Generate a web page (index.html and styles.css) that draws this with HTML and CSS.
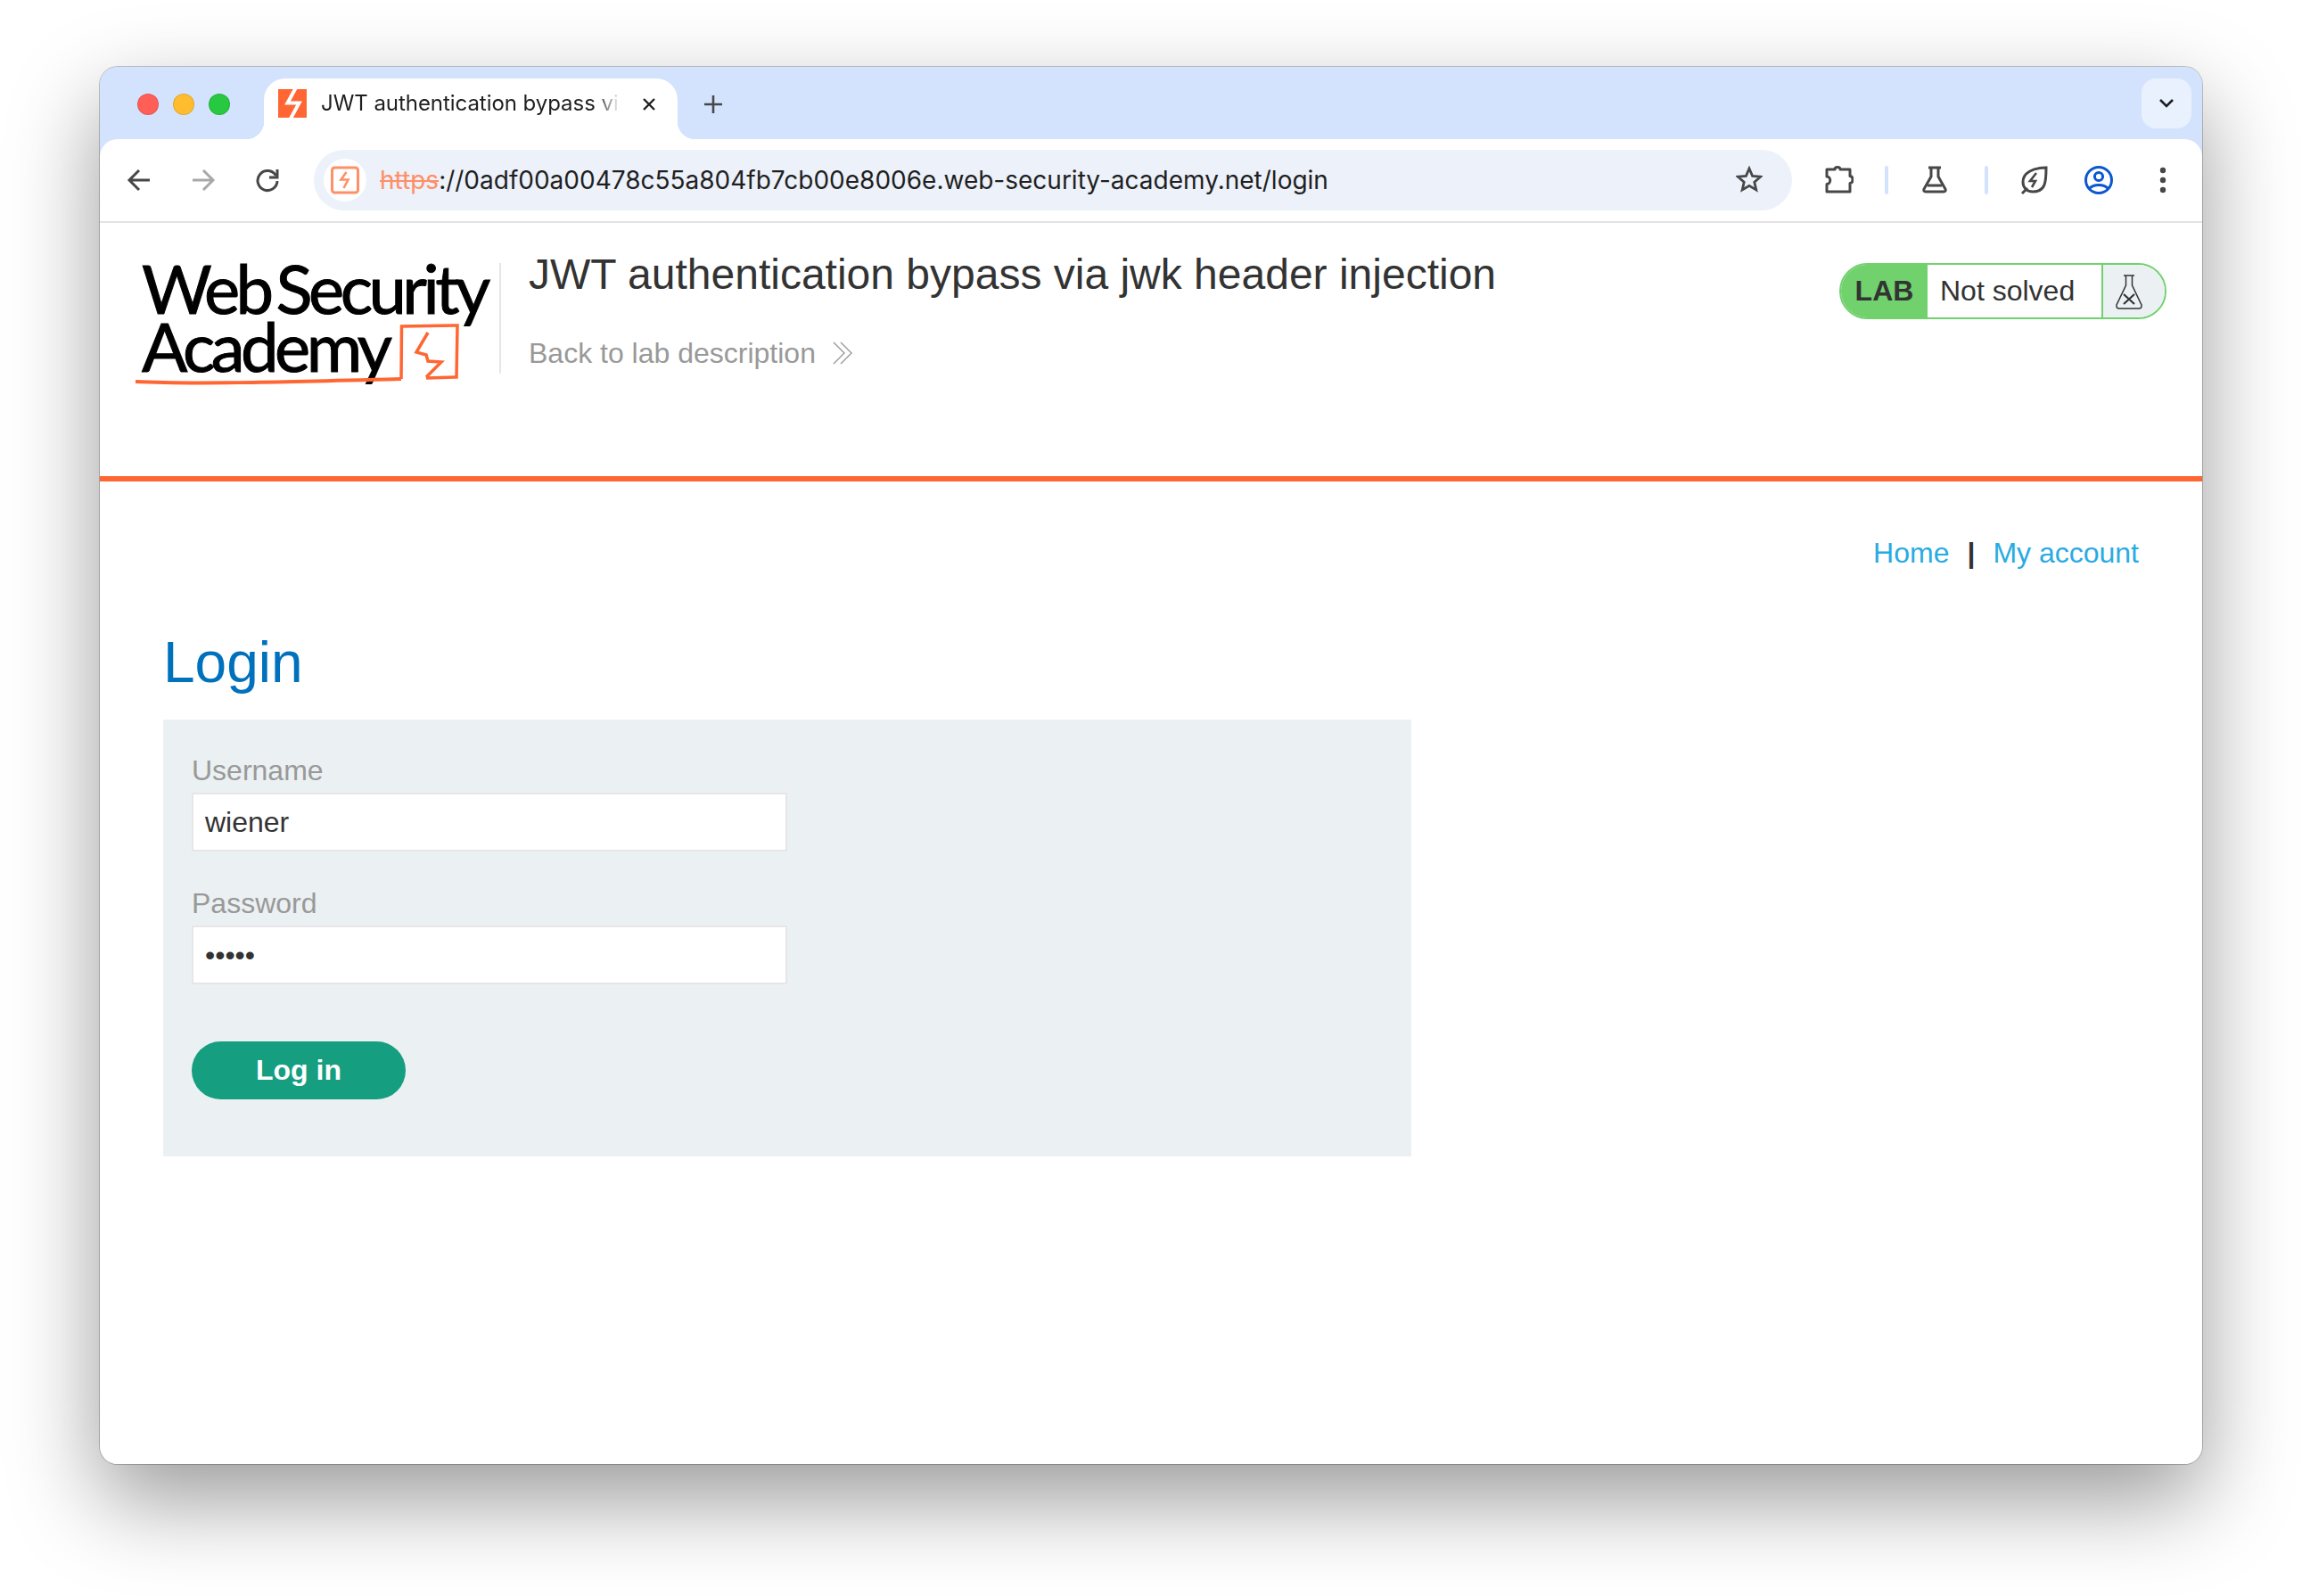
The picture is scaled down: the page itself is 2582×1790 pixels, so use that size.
FILE: index.html
```html
<!DOCTYPE html>
<html lang="en">
  <head>
    <meta charset="UTF-8" />
    <title>JWT authentication bypass via jwk header injection</title>
    <link rel="stylesheet" href="styles.css">
  </head>
  <body>
    <div class="window">
      <!-- Tab strip -->
      <div class="tabstrip">
        <div class="lights">
          <span class="light red"></span>
          <span class="light yellow"></span>
          <span class="light green"></span>
        </div>
        <div class="tab">
          <svg class="favicon" viewBox="0 0 32 32">
            <rect width="32" height="32" fill="#ff6633"/>
            <path d="M19.5 -1 L10.5 15.5 H23.5 L14 33" fill="none" stroke="#fff" stroke-width="4"/>
          </svg>
          <span class="tab-title">JWT authentication bypass via</span>
          <svg class="tab-close" viewBox="0 0 16 16"><path d="M2 2 L14 14 M14 2 L2 14" stroke="#1f1f1f" stroke-width="2.4" fill="none"/></svg>
        </div>
        <svg class="new-tab" viewBox="0 0 22 22"><path d="M11 1 V21 M1 11 H21" stroke="#474747" stroke-width="2.6" fill="none"/></svg>
        <div class="tab-search">
          <svg viewBox="0 0 18 12" width="18" height="12"><path d="M2 2 L9 9 L16 2" stroke="#1f1f1f" stroke-width="2.6" fill="none"/></svg>
        </div>
      </div>

      <!-- Toolbar -->
      <div class="toolbar">
        <div class="nav-icons">
          <svg class="icon" viewBox="0 0 28 28"><path d="M26 14 H4 M14 3 L3 14 L14 25" stroke="#474747" stroke-width="3" fill="none"/></svg>
          <svg class="icon" viewBox="0 0 28 28"><path d="M2 14 H24 M14 3 L25 14 L14 25" stroke="#a8a8a8" stroke-width="3" fill="none"/></svg>
          <svg class="icon" viewBox="0 0 28 28"><path d="M23.5 9 A11 11 0 1 0 25 15" stroke="#474747" stroke-width="3" fill="none"/><path d="M25 2 V11 H16" stroke="#474747" stroke-width="3" fill="none"/></svg>
        </div>
        <div class="omnibox">
          <div class="site-chip">
            <svg viewBox="0 0 32 32" width="32" height="32">
              <rect x="1.5" y="2" width="29" height="28" rx="3" fill="none" stroke="#ff8f66" stroke-width="3"/>
              <path d="M17.5 7 L11.5 15.5 H19.5 L14.5 25" fill="none" stroke="#ff8f66" stroke-width="2.6"/>
            </svg>
          </div>
          <div class="url"><span class="scheme">https</span>://0adf00a00478c55a804fb7cb00e8006e.web-security-academy.net/login</div>
          <svg class="icon star" viewBox="0 0 30 30"><path d="M15 3 L18.6 11.4 L27.6 12.2 L20.8 18.2 L22.8 27 L15 22.4 L7.2 27 L9.2 18.2 L2.4 12.2 L11.4 11.4 Z" stroke="#474747" stroke-width="2.8" fill="none" stroke-linejoin="miter"/></svg>
        </div>
        <div class="tool-icons">
          <svg class="icon puzzle" viewBox="0 0 32 32"><path d="M2 5 H11 C11 1.5 17 1.5 17 5 H28 V12.5 C32 12.5 32 20.5 28 20.5 V30 H2 V21.5 C7 21.5 7 13 2 13 Z" stroke="#474747" stroke-width="3" fill="none" stroke-linejoin="round"/></svg>
          <span class="divider"></span>
          <svg class="icon flask" viewBox="0 0 30 32"><path d="M8 2 H22 M11 2 V12 L3 26 Q2 29 5 29 H25 Q28 29 27 26 L19 12 V2" stroke="#474747" stroke-width="3" fill="none"/><path d="M7 22 H23" stroke="#474747" stroke-width="3"/></svg>
          <span class="divider"></span>
          <svg class="icon leaf" viewBox="0 0 32 34"><path d="M29 3 C29 20 28 30 14 30 C7 30 3 25 3 19 C3 9 14 3 29 3 Z M2 32 L8 26" stroke="#474747" stroke-width="3" fill="none"/><path d="M18 9 L11 18 H17 L13 25" stroke="#474747" stroke-width="2.6" fill="none"/></svg>
          <svg class="icon profile" viewBox="0 0 32 32"><circle cx="16" cy="16" r="14.5" stroke="#0b57d0" stroke-width="3" fill="none"/><circle cx="16" cy="12" r="4.6" stroke="#0b57d0" stroke-width="3" fill="none"/><path d="M5 26 C10 20 22 20 27 26" stroke="#0b57d0" stroke-width="3" fill="none"/></svg>
          <svg class="icon dots" viewBox="0 0 8 32"><circle cx="4" cy="5" r="3.2" fill="#474747"/><circle cx="4" cy="16" r="3.2" fill="#474747"/><circle cx="4" cy="27" r="3.2" fill="#474747"/></svg>
        </div>
      </div>

      <!-- Page -->
      <div class="page">
        <header class="lab-header">
          <div class="logo">
            <div class="logo-line">Web Security</div>
            <div class="logo-line">Academy</div>
            <svg class="logo-mark" viewBox="0 0 370 80">
              <path d="M0 73 C60 76 150 74 298 70" fill="none" stroke="#ff6633" stroke-width="4"/>
              <path d="M298 70 L298.5 11 L361 10 L360 68 L326 69" fill="none" stroke="#ff6633" stroke-width="3.5"/>
              <path d="M328 18 L315 40 L326 43 L328 50 L343 51 L326 68" fill="none" stroke="#ff6633" stroke-width="3.5"/>
            </svg>
          </div>
          <div class="lab-title">
            <h2>JWT authentication bypass via jwk header injection</h2>
            <a class="back-link" href="#">Back to lab description
              <svg viewBox="0 0 24 26" width="24" height="26"><path d="M2 1 L14 13 L2 25 M10 1 L22 13 L10 25" fill="none" stroke="#999" stroke-width="1.4"/></svg>
            </a>
          </div>
          <div class="lab-status">
            <span class="status-lab">LAB</span>
            <span class="status-text">Not solved</span>
            <span class="status-flask">
              <svg viewBox="0 0 32 40" width="32" height="40">
                <path d="M10 2 H22 M12.5 2 V13 L2 35 Q1.5 39 5 39 H27 Q30.5 39 30 35 L19.5 13 V2" fill="none" stroke="#333" stroke-width="1.5"/>
                <path d="M10 23 L22 34 M22 23 L10 34" stroke="#333" stroke-width="2.2" fill="none"/>
              </svg>
            </span>
          </div>
        </header>

        <main class="content">
          <nav class="top-links">
            <a href="#">Home</a>
            <span class="sep">|</span>
            <a href="#">My account</a>
          </nav>
          <h1>Login</h1>
          <form class="login-form" onsubmit="return false">
            <label for="username">Username</label>
            <input id="username" type="text" value="wiener" />
            <label for="password">Password</label>
            <input id="password" type="password" value="peter" />
            <button type="submit">Log in</button>
          </form>
        </main>
      </div>
    </div>
  </body>
</html>
```

FILE: styles.css
```css
* {
  box-sizing: border-box;
}

html,
body {
  height: 100%;
}

body {
  margin: 0;
  padding: 75px 112px 148px 112px;
  background-color: #fff;
  font-family: "Liberation Sans", Arial, sans-serif;
  overflow: hidden;
}

.window {
  height: 1567px;
  display: flex;
  flex-direction: column;
  background-color: #d3e3fd;
  border-radius: 20px;
  overflow: hidden;
  box-shadow: 0 0 0 1px rgba(0, 0, 0, 0.22), 0 40px 100px rgba(0, 0, 0, 0.4);
}

/* Tab strip */
.tabstrip {
  height: 81px;
  flex: none;
  display: flex;
  align-items: flex-start;
  padding-top: 13px;
  background-color: #d3e3fd;
}

.lights {
  display: flex;
  gap: 16px;
  margin: 17px 38px 0 42px;
}

.light {
  width: 24px;
  height: 24px;
  border-radius: 50%;
  border: 1px solid rgba(0, 0, 0, 0.1);
}

.red { background-color: #ff5f57; }
.yellow { background-color: #febc2e; }
.green { background-color: #28c840; }

.tab {
  position: relative;
  width: 464px;
  height: 68px;
  display: flex;
  align-items: flex-start;
  padding: 12px 0 0 16px;
  background-color: #fff;
  border-radius: 24px 24px 0 0;
}

/* the flared bottom corners of the tab */
.tab::before,
.tab::after {
  content: "";
  position: absolute;
  bottom: 0;
  width: 20px;
  height: 20px;
}

.tab::before {
  left: -20px;
  background: radial-gradient(circle at 0 0, #d3e3fd 20px, #fff 20.5px);
}

.tab::after {
  right: -20px;
  background: radial-gradient(circle at 100% 0, #d3e3fd 20px, #fff 20.5px);
}

.favicon {
  width: 32px;
  height: 32px;
  flex: none;
}

.tab-title {
  width: 346px;
  margin-left: 16px;
  white-space: nowrap;
  font-family: Inter, "Liberation Sans", sans-serif;
  font-size: 24px;
  letter-spacing: -0.05px;
  line-height: 32px;
  color: #1f1f1f;
  -webkit-mask-image: linear-gradient(to right, #000 89%, transparent 97%);
  mask-image: linear-gradient(to right, #000 89%, transparent 97%);
}

.tab-close {
  width: 16px;
  height: 16px;
  margin: 9px 0 0 14px;
  flex: none;
}

.new-tab {
  width: 22px;
  height: 22px;
  margin: 18px 0 0 29px;
  flex: none;
}

.tab-search {
  width: 56px;
  height: 56px;
  margin-left: auto;
  margin-right: 12px;
  display: flex;
  align-items: center;
  justify-content: center;
  border-radius: 16px;
  background-color: #e9f0fe;
}

/* Toolbar */
.toolbar {
  height: 94px;
  flex: none;
  display: flex;
  align-items: center;
  background-color: #fff;
  border-bottom: 2px solid #e3e3e3;
  border-radius: 20px 20px 0 0;
}

.icon {
  display: block;
  flex: none;
}

.nav-icons {
  width: 240px;
  display: flex;
  gap: 44px;
  padding-left: 30px;
}

.nav-icons .icon {
  width: 28px;
  height: 28px;
}

.omnibox {
  width: 1658px;
  height: 68px;
  display: flex;
  align-items: center;
  padding: 0 33px 0 11px;
  background-color: #ecf1fa;
  border-radius: 34px;
}

.site-chip {
  width: 48px;
  height: 48px;
  flex: none;
  display: flex;
  align-items: center;
  justify-content: center;
  background-color: #fff;
  border-radius: 50%;
}

.url {
  flex: 1;
  margin-left: 15px;
  font-family: Inter, "Liberation Sans", sans-serif;
  font-size: 28px;
  color: #1f1f1f;
  white-space: nowrap;
}

.scheme {
  color: #ff8f66;
  text-decoration: line-through;
}

.star {
  width: 30px;
  height: 30px;
  margin-top: -2px;
}

.tool-icons {
  flex: 1;
  display: flex;
  align-items: center;
  padding-left: 37px;
}

.puzzle { width: 32px; height: 32px; margin-top: -3px; }
.flask { width: 30px; height: 32px; margin: 0 41px 0 37px; }
.leaf { width: 32px; height: 34px; margin-left: 36px; }
.profile { width: 32px; height: 32px; margin-left: 40px; }
.dots { width: 8px; height: 32px; margin-left: 52px; }

.divider {
  width: 4px;
  height: 32px;
  border-radius: 2px;
  background-color: #d3e3fd;
}

.puzzle + .divider { margin-left: 35px; }

/* Page */
.page {
  flex: 1;
  background-color: #fff;
}

.lab-header {
  height: 290px;
  display: flex;
  align-items: flex-start;
  padding: 0 40px 0 40px;
  border-bottom: 6px solid #ff6633;
}

.logo {
  position: relative;
  width: 410px;
  height: 124px;
  margin-top: 45px;
  padding-left: 7px;
  border-right: 2px solid #e6e6e6;
  font-family: Lato, "Liberation Sans", sans-serif;
  font-size: 76px;
  font-weight: 400;
  letter-spacing: -4.5px;
  word-spacing: -8px;
  color: #000;
  line-height: 65px;
  -webkit-text-stroke: 1px #000;
}

.logo-line {
  white-space: nowrap;
}

.logo-line:first-child {
  margin-top: -5px;
}

/* underline and bracket drawn over the logo text */
.logo-mark {
  position: absolute;
  left: 0;
  top: 60px;
  width: 370px;
  height: 80px;
}

.lab-title {
  flex: 1;
  margin-left: 31px;
}

.lab-title h2 {
  margin: 30px 0 0;
  font-size: 48px;
  font-weight: 400;
  line-height: 56px;
  color: #333;
}

.back-link {
  display: flex;
  align-items: center;
  gap: 18px;
  margin-top: 40px;
  font-size: 32px;
  line-height: 40px;
  color: #999;
  text-decoration: none;
}

.lab-status {
  width: 367px;
  height: 63px;
  margin: 45px 0 0;
  display: flex;
  align-items: stretch;
  border: 2px solid #70d16d;
  border-radius: 32px;
  overflow: hidden;
  font-size: 32px;
  color: #333;
}

.status-lab {
  width: 97px;
  display: flex;
  align-items: center;
  justify-content: center;
  font-weight: 700;
  background-color: #70d16d;
}

.status-text {
  width: 197px;
  display: flex;
  align-items: center;
  padding-left: 14px;
  background-color: #fff;
  border-right: 2px solid #70d16d;
}

.status-flask {
  flex: 1;
  display: flex;
  align-items: center;
  padding-left: 13px;
  background-color: #ebf0f2;
}

.content {
  padding: 0 0 0 71px;
}

.top-links {
  display: flex;
  align-items: center;
  justify-content: flex-end;
  gap: 20px;
  margin: 60px 71px 0 0;
  font-size: 32px;
  line-height: 40px;
}

.top-links a {
  color: #29abe2;
  text-decoration: none;
}

.top-links .sep {
  color: #333;
  font-weight: 700;
}

.content h1 {
  margin: 63px 0 0;
  font-size: 64px;
  font-weight: 400;
  line-height: 80px;
  color: #0071bc;
}

.login-form {
  width: 1400px;
  height: 490px;
  margin-top: 24px;
  padding: 39px 32px 32px;
  background-color: #ebf0f2;
  display: flex;
  flex-direction: column;
  align-items: flex-start;
}

.login-form label {
  font-size: 32px;
  line-height: 36px;
  color: #999;
  margin-bottom: 7px;
}

.login-form input {
  width: 668px;
  height: 66px;
  margin-bottom: 40px;
  padding: 0 13px;
  border: 2px solid #e6e6e6;
  background-color: #fff;
  font-family: inherit;
  font-size: 32px;
  color: #333;
}

.login-form button {
  width: 240px;
  height: 65px;
  margin-top: 24px;
  border: 0;
  border-radius: 33px;
  background-color: #159e80;
  font-family: inherit;
  font-size: 32px;
  font-weight: 700;
  color: #fff;
}
```
